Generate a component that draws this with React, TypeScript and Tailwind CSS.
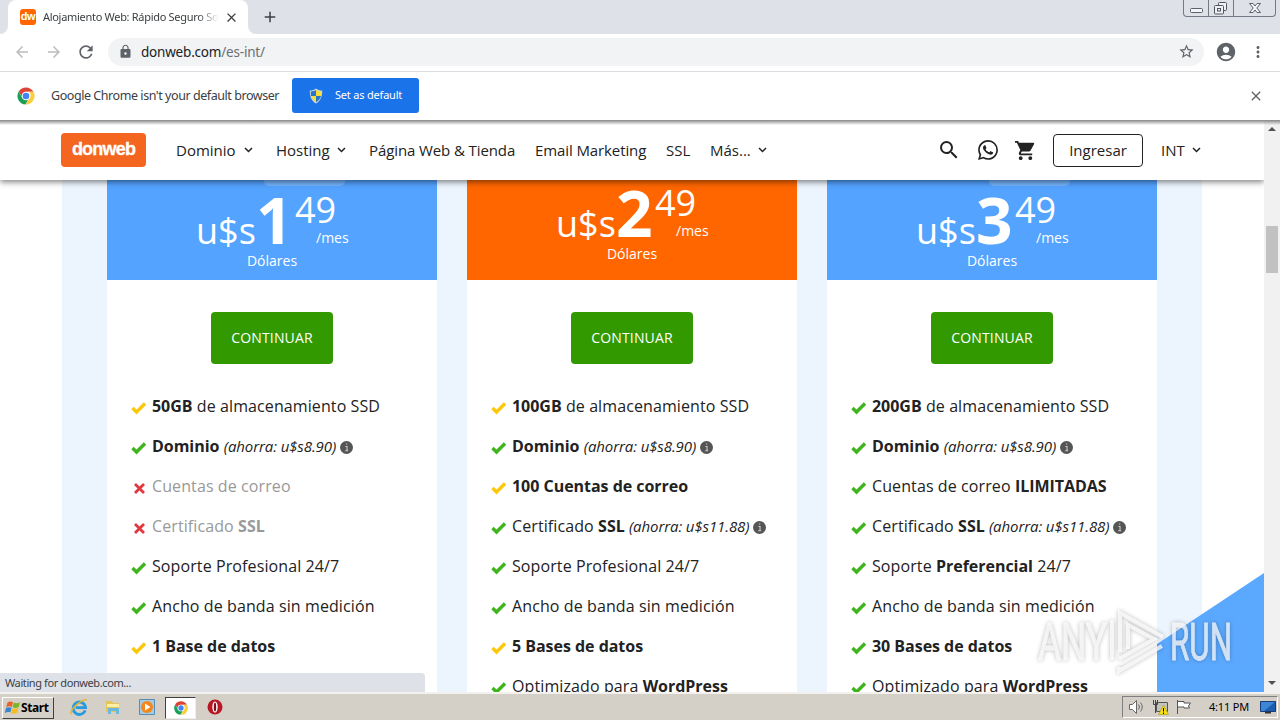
import React from 'react';
import { MdSearch, MdShoppingCart, MdStarBorder, MdAccountCircle, MdLock, MdRefresh, MdArrowBack, MdArrowForward, MdMoreVert, MdClose, MdAdd } from 'react-icons/md';

type Mark = 'green' | 'yellow' | 'red';
type Feature = { mark: Mark; text: React.ReactNode; info?: boolean; muted?: boolean };

const Save = ({ amount }: { amount: string }) => (
  <i className="text-[15px] tracking-[-0.1px]">(ahorra: u$s{amount})</i>
);

const plans: { price: string; featured?: boolean; badge?: string; features: Feature[] }[] = [
  {
    price: '1',
    badge: 'ml-[157px]',
    features: [
      { mark: 'yellow', text: <><b>50GB</b> de almacenamiento SSD</> },
      { mark: 'green', text: <><b>Dominio</b> <Save amount="8.90" /></>, info: true },
      { mark: 'red', text: 'Cuentas de correo', muted: true },
      { mark: 'red', text: <>Certificado <b>SSL</b></>, muted: true },
      { mark: 'green', text: 'Soporte Profesional 24/7' },
      { mark: 'green', text: 'Ancho de banda sin medición' },
      { mark: 'yellow', text: <b>1 Base de datos</b> },
    ],
  },
  {
    price: '2',
    featured: true,
    features: [
      { mark: 'yellow', text: <><b>100GB</b> de almacenamiento SSD</> },
      { mark: 'green', text: <><b>Dominio</b> <Save amount="8.90" /></>, info: true },
      { mark: 'yellow', text: <b>100 Cuentas de correo</b> },
      { mark: 'green', text: <>Certificado <b>SSL</b> <Save amount="11.88" /></>, info: true },
      { mark: 'green', text: 'Soporte Profesional 24/7' },
      { mark: 'green', text: 'Ancho de banda sin medición' },
      { mark: 'yellow', text: <b>5 Bases de datos</b> },
      { mark: 'green', text: <>Optimizado para <b>WordPress</b></> },
    ],
  },
  {
    price: '3',
    badge: 'ml-[162px]',
    features: [
      { mark: 'green', text: <><b>200GB</b> de almacenamiento SSD</> },
      { mark: 'green', text: <><b>Dominio</b> <Save amount="8.90" /></>, info: true },
      { mark: 'green', text: <>Cuentas de correo <b>ILIMITADAS</b></> },
      { mark: 'green', text: <>Certificado <b>SSL</b> <Save amount="11.88" /></>, info: true },
      { mark: 'green', text: <>Soporte <b>Preferencial</b> 24/7</> },
      { mark: 'green', text: 'Ancho de banda sin medición' },
      { mark: 'green', text: <b>30 Bases de datos</b> },
      { mark: 'green', text: <>Optimizado para <b>WordPress</b></> },
    ],
  },
];

function MarkIcon({ mark }: { mark: Mark }) {
  if (mark === 'red') {
    return (
      <svg className="w-4 h-4 mt-1 shrink-0" viewBox="0 0 16 16">
        <path d="M4 4l9 9M13 4l-9 9" stroke="#e2373c" strokeWidth="2.800" />
      </svg>
    );
  }
  return (
    <svg className="w-4 h-4 mt-[3px] shrink-0" viewBox="0 0 16 16">
      <path d="M1.500 8L5.500 12L14 3.500" fill="none" stroke={mark === 'green' ? '#3fb41c' : '#fdc70c'} strokeWidth="3.400" />
    </svg>
  );
}

const Chevron = ({ className }: { className: string }) => (
  <svg className={`w-[9px] h-[6px] shrink-0 ${className}`} viewBox="0 0 9 6">
    <path d="M1 1l3.5 3.5L8 1" fill="none" stroke="#222" strokeWidth="1.5" />
  </svg>
);

const ChromeLogo = () => (
  <svg className="w-[18px] h-[18px]" viewBox="0 0 18 18">
    <circle cx="9" cy="9" r="8.5" fill="#fff" />
    <path d="M1.7 4.6A8.5 8.5 0 0 1 16.4 4.8H9a4.2 4.2 0 0 0-3.9 2.6L5 9.8z" fill="#dc4437" />
    <path d="M1.7 4.6A8.5 8.5 0 0 0 8.4 17.5l3.6-6.2A4.2 4.2 0 0 1 5.3 11z" fill="#1a9f57" />
    <path d="M16.4 4.8A8.5 8.5 0 0 1 8.4 17.5L12.6 11.2A4.2 4.2 0 0 0 11.6 4.8z" fill="#fdcd40" />
    <circle cx="9" cy="9" r="4.2" fill="#fff" />
    <circle cx="9" cy="9" r="3.3" fill="#4284f3" />
  </svg>
);

function WhatsApp() {
  return (
    <svg className="w-5 h-5 ml-[17px]" viewBox="0 0 24 24" fill="#222">
      <path d="M17.472 14.382c-.297-.149-1.758-.867-2.03-.967-.273-.099-.471-.148-.67.15-.197.297-.767.966-.94 1.164-.173.199-.347.223-.644.075-.297-.15-1.255-.463-2.39-1.475-.883-.788-1.48-1.761-1.653-2.059-.173-.297-.018-.458.13-.606.134-.133.298-.347.446-.52.149-.174.198-.298.298-.497.099-.198.05-.371-.025-.52-.075-.149-.669-1.612-.916-2.207-.242-.579-.487-.5-.669-.51-.173-.008-.371-.01-.57-.01-.198 0-.52.074-.792.372-.272.297-1.04 1.016-1.04 2.479 0 1.462 1.065 2.875 1.213 3.074.149.198 2.096 3.2 5.077 4.487.709.306 1.262.489 1.694.625.712.227 1.36.195 1.871.118.571-.085 1.758-.719 2.006-1.413.248-.694.248-1.289.173-1.413-.074-.124-.272-.198-.57-.347M12.051 21.785h-.004a9.87 9.87 0 01-5.031-1.378l-.361-.214-3.741.982.998-3.648-.235-.374a9.86 9.86 0 01-1.51-5.26c.001-5.45 4.436-9.884 9.888-9.884a9.82 9.82 0 016.988 2.898 9.825 9.825 0 012.893 6.994c-.003 5.45-4.437 9.884-9.885 9.884M20.463 3.488A11.815 11.815 0 0012.05 0C5.495 0 .16 5.335.157 11.892c0 2.096.547 4.142 1.588 5.945L.057 24l6.305-1.654a11.882 11.882 0 005.683 1.448h.005c6.554 0 11.89-5.335 11.893-11.893a11.821 11.821 0 00-3.48-8.413z" />
    </svg>
  );
}

function WindowButtons() {
  return (
    <div className="flex w-[93px] h-[17px] ml-auto mr-1 border border-t-0 border-[#737985] rounded-b-[4px]">
      <div className="w-[25px] border-r border-[#737985]">
        <svg className="w-6 h-4" viewBox="0 0 24 16"><rect x="6.5" y="8.5" width="12" height="4" rx="1" fill="#f5f5f7" stroke="#5c616b" /></svg>
      </div>
      <div className="w-[25px] border-r border-[#737985]">
        <svg className="w-6 h-4" viewBox="0 0 24 16" fill="#eef0f3" stroke="#50555f">
          <rect x="9.500" y="2.500" width="8" height="8" rx="1" />
          <rect x="5.500" y="5.500" width="9" height="8.500" rx="1" />
          <rect x="8.500" y="8.500" width="3" height="2.500" />
        </svg>
      </div>
      <svg className="w-[41px] h-4" viewBox="0 0 41 16">
        <path d="M15.500 3.500h3.500l2 2.500 2-2.500h3.500l-3.700 4.500 3.700 4.500h-3.500l-2-2.500-2 2.500h-3.500l3.700-4.500z" fill="#f5f5f7" stroke="#5c616b" />
      </svg>
    </div>
  );
}

function BrowserChrome() {
  return (
    <div className="font-['Noto_Sans','Open_Sans',sans-serif] text-[#3c4043]">
      <div className="flex h-[34px] bg-[#dee1e7]">
        <div className="w-2 bg-white"><div className="h-full bg-[#dee1e7] rounded-br-lg" /></div>
        <div className="flex items-center w-[240px] bg-white rounded-t-lg pl-3">
          <div className="w-4 h-4 rounded-[3px] bg-[#ff6600] text-white text-[11px] leading-[14px] font-bold text-center tracking-[-0.5px] font-['Liberation_Sans',sans-serif]">dw</div>
          <div className="ml-[7px] w-[177px] overflow-hidden whitespace-nowrap text-[11px] tracking-[-0.3px] [mask-image:linear-gradient(to_right,black_155px,transparent_176px)]">Alojamiento Web: Rápido Seguro Sop</div>
          <MdClose className="w-[15px] h-[15px] ml-1 shrink-0" />
        </div>
        <div className="w-2 bg-white"><div className="h-full bg-[#dee1e7] rounded-bl-lg" /></div>
        <MdAdd className="w-[18px] h-[18px] ml-[5px] mt-2" />
        <WindowButtons />
      </div>
      <div className="flex items-center h-[38px] bg-white border-b border-[#dadce0] pb-0.5">
        <MdArrowBack className="w-[18px] h-[18px] ml-[13px] text-[#babcbe]" />
        <MdArrowForward className="w-[18px] h-[18px] ml-[14px] text-[#babcbe]" />
        <MdRefresh className="w-5 h-5 ml-[13px] text-[#5f6368]" />
        <div className="flex items-center w-[1096px] h-7 ml-3 rounded-full bg-[#f1f3f4] pl-2.5 pr-[9px]">
          <MdLock className="w-[15px] h-[15px] text-[#5f6368]" />
          <div className="ml-[8px] text-[13.5px] leading-7 tracking-[-0.2px] text-[#202124]">donweb.com<span className="text-[#6b7075]">/es-int/</span></div>
          <MdStarBorder className="w-[17px] h-[17px] ml-auto text-[#5f6368]" />
        </div>
        <MdAccountCircle className="w-[22px] h-[22px] ml-[11px] text-[#5f6368]" />
        <MdMoreVert className="w-[18px] h-[18px] ml-3 text-[#5f6368]" />
      </div>
      <div className="flex items-center h-[49px] bg-white pl-[17px] pb-0.5">
        <ChromeLogo />
        <div className="w-[241px] ml-4 mt-0.5 text-[12.5px] tracking-[-0.44px] whitespace-nowrap">Google Chrome isn't your default browser</div>
        <div className="flex items-center w-[127px] h-[35px] bg-[#1a73e8] rounded-[3px] text-white text-[11px] tracking-[-0.2px] pl-4">
          <svg className="w-4 h-4 mr-[11px]" viewBox="0 0 16 16">
            <path d="M8 .5c2 1.500 4 2 6.200 2C14.500 8 12.500 13 8 15.500 3.500 13 1.500 8 1.800 2.500c2.200 0 4.200-.5 6.200-2z" fill="#c8d4df" />
            <path d="M8 2v6H3C2.800 6.500 2.800 5 2.900 3.500 5 3.400 6.500 3 8 2z" fill="#2876c8" />
            <path d="M8 2v6h5c.2-1.500.2-3 .1-4.500C11 3.400 9.500 3 8 2z" fill="#f8db3c" />
            <path d="M8 8v6.200C5.500 12.700 3.700 10.800 3 8z" fill="#f8db3c" />
            <path d="M8 8v6.200c2.500-1.500 4.300-3.400 5-6.200z" fill="#2876c8" />
          </svg>
          Set as default
        </div>
        <MdClose className="w-4 h-4 ml-auto mr-4 text-[#5f6368]" />
      </div>
    </div>
  );
}

function SiteHeader() {
  return (
    <header className="relative z-10 flex items-center h-[59px] bg-white pl-[61px] pb-px text-[15px] text-[#222] whitespace-nowrap shadow-[0_2px_6px_rgba(0,0,0,0.5)]">
      <div className="w-[85px] h-[34px] rounded-[4px] bg-[#f4661f] text-white text-center text-[18px] leading-[33px] font-bold tracking-[-0.8px] font-['Liberation_Sans',sans-serif] [-webkit-text-stroke:0.3px_white]">donweb</div>
      <div className="w-[60px] ml-[30px]">Dominio</div><Chevron className="ml-2" />
      <div className="w-[54px] ml-[23px]">Hosting</div><Chevron className="ml-[7px]" />
      <div className="w-[146px] ml-[23px] tracking-[-0.1px]">Página Web &amp; Tienda</div>
      <div className="w-[111px] ml-5 tracking-[-0.1px]">Email Marketing</div>
      <div className="w-6 ml-5">SSL</div>
      <div className="w-10 ml-5">Más...</div><Chevron className="ml-2" />
      <MdSearch className="w-6 h-6 ml-[170px]" />
      <WhatsApp />
      <MdShoppingCart className="w-[23px] h-[23px] ml-4" />
      <div className="w-[90px] h-[33px] ml-4 border border-[#222] rounded-[4px] text-center leading-[31px]">Ingresar</div>
      <div className="w-6 ml-[18px]">INT</div><Chevron className="ml-[7px]" />
    </header>
  );
}

function PlanCard({ plan }: { plan: (typeof plans)[number] }) {
  return (
    <div className="w-[330px] h-full bg-white">
      <div className={`flow-root h-[100px] text-white ${plan.featured ? 'bg-[#ff6600]' : 'bg-[#53a3ff]'}`}>
        {plan.featured ? null : <div className={`w-[81px] h-[6px] rounded-b-[5px] bg-white/20 ${plan.badge}`} />}
        <div className={`flex items-start h-[65px] pl-[89px] ${plan.featured ? '-mt-px' : ''}`}>
          <div className="w-[60px] mt-[27px] text-[36px] leading-9">u$s</div>
          <div className="w-[39px] text-[64px] leading-[67px] font-bold">{plan.price}</div>
          <div>
            <div className="pt-[6px] text-[36px] leading-9">49</div>
            <div className="mt-[3px] ml-[21px] text-[14px] leading-[14px]">/mes</div>
          </div>
        </div>
        <div className="text-center text-[14px] leading-5">Dólares</div>
      </div>
      <div className="w-[122px] h-[52px] mt-8 mx-auto rounded-[4px] bg-[#339900] text-white text-[14px] leading-[52px] text-center tracking-[0.15px]">CONTINUAR</div>
      <ul className="mt-[22px] pl-6 text-[16px] leading-10 text-[#222]">
        {plan.features.map((f, i) => (
          <li key={i} className={`flex items-center h-10 whitespace-nowrap ${f.muted ? 'text-[#999]' : ''}`}>
            <MarkIcon mark={f.mark} />
            <span className="ml-[5px] tracking-[0.1px] [&_b]:tracking-[-0.03px]">{f.text}</span>
            {f.info && (
              <svg className="w-[13px] h-[13px] ml-1 mt-[2px]" viewBox="0 0 12 12">
                <circle cx="6" cy="6" r="6" fill="#555" />
                <path d="M5 5h1.500v4M4.800 9h2.700M5.500 2.800h1.200" fill="none" stroke="#ccc" />
              </svg>
            )}
          </li>
        ))}
      </ul>
    </div>
  );
}

function Watermark() {
  return (
    <svg className="absolute left-[1030px] top-[479px] w-[210px] h-[80px] drop-shadow-[0_0_2px_rgba(0,0,0,0.35)]" viewBox="0 0 210 80" fill="#fff" fontFamily="Roboto, sans-serif" fontSize="52">
      <g opacity="0.75">
        <text x="8" y="60" textLength="69" lengthAdjust="spacingAndGlyphs" stroke="#fff" strokeWidth="1">ANY</text>
        <text x="140" y="60" textLength="62" lengthAdjust="spacingAndGlyphs" stroke="#fff" strokeWidth="1">RUN</text>
        <path d="M82 20v40M90 52V13l43 24M98 49V25l26 14-35 20M89 67v4l43-25" fill="none" stroke="#fff" strokeWidth="4" />
      </g>
    </svg>
  );
}

function Taskbar() {
  return (
    <div className="flex items-center h-7 bg-[#d4d0c8] border-t-2 border-[#f4f2ee] text-black font-['Noto_Sans',sans-serif]">
      <div className="flex items-center w-[52px] h-[22px] ml-0.5 mt-0.5 bg-[#d4d0c8] border border-t-white border-l-white border-b-[#404040] border-r-[#404040] text-[12px] font-bold tracking-[-0.4px]">
        <svg className="w-4 h-4 ml-0.5" viewBox="0 0 16 16">
          <path d="M2.500 2.500C5 1 6.500 1.500 8 2.200L6.800 7C5 6 3.500 6 1.200 7.200z" fill="#ed6128" />
          <path d="M8.800 2.600c2 1 4 .8 6.200-.4l-1.300 4.900c-2.300 1.200-4 1.200-6.100.2z" fill="#78b72a" />
          <path d="M1 8c2-1.200 3.700-1 5.600-.2L5.300 12.600C3.500 11.800 2 12-.2 13z" fill="#3784d0" />
          <path d="M7.400 8.200c2 1 4 .8 6.200-.4l-1.300 4.900c-2.300 1.200-4 1.200-6.100.2z" fill="#f9bd24" />
        </svg>
        Start
      </div>
      <svg className="w-[18px] h-[18px] ml-4" viewBox="0 0 16 16">
        <path d="M13.500 11A5.500 5.500 0 1 1 13.800 8.500H5" fill="none" stroke="#279bdd" strokeWidth="2.500" />
        <path d="M1 14.500C-1 10 13-1 15 2" fill="none" stroke="#e3b52e" strokeWidth="1.300" />
      </svg>
      <svg className="w-4 h-4 ml-[17px]" viewBox="0 0 16 16">
        <path d="M1 2h6l1 2h6v9H1z" fill="#e5c45c" />
        <path d="M2 5h12v3H2z" fill="#fff0a5" />
        <path d="M3 15V9h11v6h-3v-3H6v3z" fill="#69b8df" />
      </svg>
      <svg className="w-4 h-4 ml-[18px]" viewBox="0 0 16 16">
        <path d="M.5.5h15v15H.5z" fill="#a8cbe4" stroke="#568cb8" />
        <circle cx="8" cy="8" r="6" fill="#f38719" />
        <path d="M6 4.500l5.500 3.500L6 11.500z" fill="#fff" />
      </svg>
      <div className="flex items-center justify-center w-[31px] h-[22px] mt-px ml-[10px] bg-white border border-t-[#404040] border-l-[#404040] border-b-[#eee] border-r-[#eee]">
        <div className="scale-[0.8]"><ChromeLogo /></div>
      </div>
      <svg className="w-4 h-4 ml-[11px]" viewBox="0 0 16 16">
        <circle cx="8" cy="8" r="7.500" fill="#b71823" />
        <ellipse cx="8" cy="8" rx="2.700" ry="5.500" fill="#fff" />
        <ellipse cx="8" cy="8" rx="1.200" ry="4.500" fill="#7d1119" />
      </svg>
      <div className="flex items-center w-[156px] h-[22px] ml-auto mr-0.5 border border-t-[#808080] border-l-[#808080] border-b-white border-r-white">
        <svg className="w-[18px] h-4 ml-[5px]" viewBox="0 0 18 16" fill="none" stroke="#666">
          <path d="M1.500 5.500h3l4-4v13l-4-4h-3z" fill="#fff" />
          <path d="M10.500 5.500q2 2.500 0 5M12.500 3.500q3.500 4.500 0 9" />
        </svg>
        <svg className="w-[18px] h-4 ml-1.5" viewBox="0 0 18 16">
          <path d="M4.500 3.500h11v9h-11z" fill="#c4c4bd" stroke="#555" />
          <path d="M1.500 1v4.500h4V1M3.500 1v13" fill="none" stroke="#444" />
          <path d="M11.500 6l5 9.500h-10z" fill="#f7df13" stroke="#a08700" strokeWidth=".5" />
          <path d="M11.500 9v3.500M11.500 13.500V15" stroke="#000" />
        </svg>
        <svg className="w-4 h-4 ml-1.5" viewBox="0 0 16 16">
          <path d="M1.500 1v14M2 2.500h6v1.500h6.500l-2 3 1 2H8V8H2" fill="#fff" stroke="#555" />
        </svg>
        <div className="w-[41px] ml-[17px] text-[11px] tracking-[-0.2px] whitespace-nowrap">4:11 PM</div>
        <svg className="w-4 h-4 ml-[10px]" viewBox="0 0 16 16">
          <path d="M.5 2.500h15v10H.5z" fill="#1d5cae" stroke="#173b77" />
          <path d="M1 3h14L4 12H1z" fill="#3d86d6" />
          <path d="M5 13h6v1.500H5z" fill="#333" />
        </svg>
      </div>
    </div>
  );
}

export default function App() {
  return (
    <div className="flex flex-col w-[1280px] h-[720px] overflow-hidden bg-white font-['Open_Sans',sans-serif]">
      <BrowserChrome />
      <div className="relative flex h-[571px]">
        <div className="w-[1264px] h-full overflow-hidden">
          <SiteHeader />
          <div className="relative w-[1140px] h-[512px] ml-[62px] bg-[#ecf5fe]">
            {/* slanted blue backdrop behind the last card */}
            <svg className="absolute left-[1095px] bottom-0 w-[107px] h-[119px]" viewBox="0 0 107 119">
              <path d="M0 71L107 0v119H0z" fill="#5ba9ff" />
            </svg>
            <div className="relative flex h-full gap-[30px] pl-[45px] overflow-hidden">
              {plans.map((plan) => <PlanCard key={plan.price} plan={plan} />)}
            </div>
          </div>
        </div>
        <div className="flex flex-col items-center w-4 bg-[#f1f1f1]">
          <svg className="w-2 h-1 mt-1.5" viewBox="0 0 8 4"><path d="M0 4l4-4 4 4z" fill="#505050" /></svg>
          <div className="w-3 h-[47px] mt-[95px] bg-[#c1c1c1]" />
          <svg className="w-2 h-1 mt-auto mb-[7px]" viewBox="0 0 8 4"><path d="M0 0l4 4 4-4z" fill="#505050" /></svg>
        </div>
        <div className="absolute z-20 inset-x-0 -top-px h-[5px] bg-linear-to-b from-[#858585] to-transparent" />
        <Watermark />
        <div className="absolute left-0 bottom-0 w-[425px] h-[19px] pl-[5px] rounded-tr-[4px] bg-[#dee1e7] text-[11px] leading-[19px] tracking-[-0.4px] text-[#3c4043] font-['Noto_Sans',sans-serif]">Waiting for donweb.com...</div>
      </div>
      <Taskbar />
    </div>
  );
}
